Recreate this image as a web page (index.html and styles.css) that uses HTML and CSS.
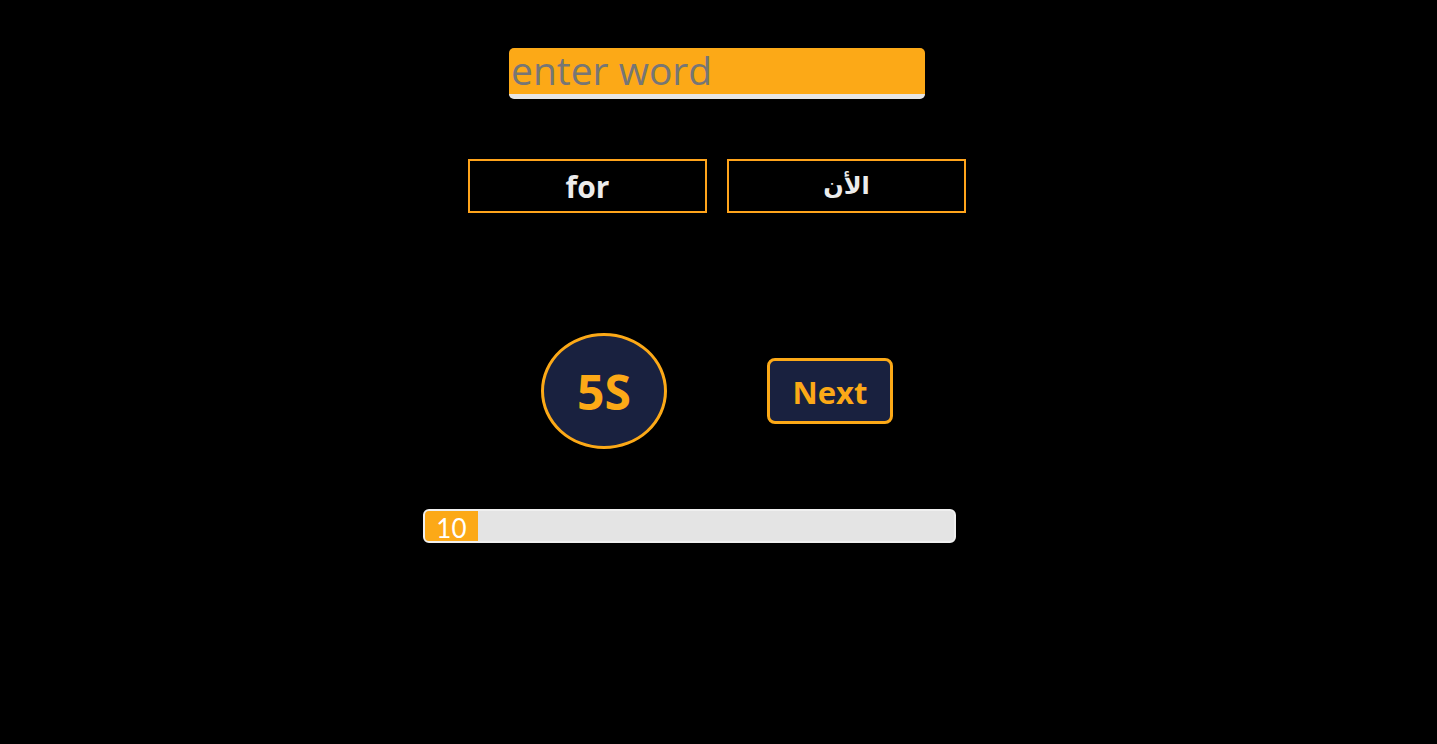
FILE: index.html
```html
<!DOCTYPE html>
<html lang="en">
<head>
<meta charset="utf-8">
<title>Typing game</title>
<link rel="stylesheet" href="styles.css">
</head>
<body>
<main class="app">
  <input class="word-input" type="text" placeholder="enter word">
  <div class="words">
    <div class="word-box">for</div>
    <div class="word-box word-ar" lang="ar" dir="rtl">الأن</div>
  </div>
  <div class="controls">
    <div class="timer">5S</div>
    <button class="next-btn" type="button">Next</button>
  </div>
  <div class="progress">
    <div class="progress-fill" style="width:10%">10</div>
  </div>
</main>
</body>
</html>
```
FILE: styles.css
```css
html, body {
  margin: 0;
  padding: 0;
  background: #000;
  height: 100%;
}
.app {
  display: flex;
  flex-direction: column;
  align-items: center;
  padding-right: 3px;
  font-family: "Comic Sans MS", "Open Sans", "Noto Sans", sans-serif;
}
.word-input {
  box-sizing: border-box;
  margin-top: 48px;
  width: 416px;
  height: 51px;
  background: #fca917;
  border: none;
  border-bottom: 5px solid #e6e6e6;
  border-radius: 5px;
  padding: 0 2px 3px;
  font-family: "Comic Sans MS", "Open Sans", sans-serif;
  font-size: 39px;
  color: #777;
  outline: none;
}
.word-input::placeholder {
  color: #767676;
}
.words {
  display: flex;
  gap: 20px;
  margin-top: 60px;
}
.word-box {
  box-sizing: border-box;
  width: 239px;
  height: 54px;
  border: 2px solid #ffa41b;
  display: flex;
  align-items: center;
  justify-content: center;
  color: #ececec;
  font-weight: bold;
  font-size: 30px;
}
.word-ar {
  font-family: "DejaVu Sans", "Noto Sans", sans-serif;
  font-weight: bold;
  font-size: 24px;
}
.controls {
  display: flex;
  align-items: center;
  gap: 100px;
  margin-top: 120px;
}
.timer {
  box-sizing: border-box;
  width: 126px;
  height: 116px;
  border-radius: 50%;
  border: 3px solid #fca917;
  background: #19213f;
  color: #fca917;
  display: flex;
  align-items: center;
  justify-content: center;
  font-weight: bold;
  font-size: 48px;
}
.next-btn {
  box-sizing: border-box;
  width: 126px;
  height: 66px;
  border-radius: 8px;
  border: 3px solid #fca917;
  background: #19213f;
  color: #fca917;
  font-family: "Comic Sans MS", "Open Sans", sans-serif;
  font-weight: bold;
  font-size: 31px;
  padding: 2px 0 0;
}
.progress {
  box-sizing: border-box;
  margin-top: 60px;
  margin-right: 55px;
  width: 533px;
  height: 34px;
  background: #e4e4e4;
  border: 2px solid #f0f0f0;
  border-radius: 6px;
  overflow: hidden;
  display: flex;
}
.progress-fill {
  background: #fca917;
  color: #fff;
  font-family: "Lato", sans-serif;
  font-size: 26px;
  line-height: 34px;
  text-align: center;
  height: 100%;
}
```
